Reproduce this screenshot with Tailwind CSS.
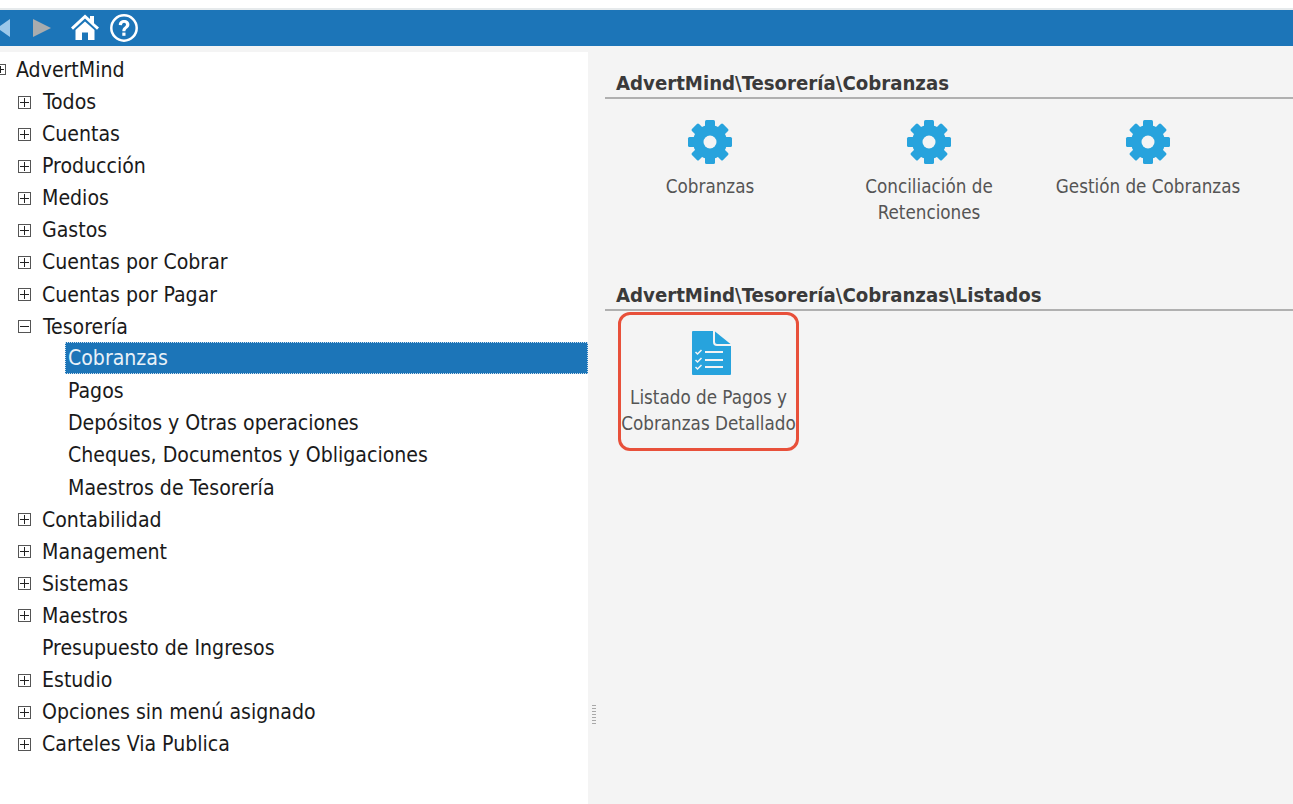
<!DOCTYPE html>
<html lang="es"><head><meta charset="utf-8"><title>AdvertMind</title>
<script src="https://cdn.jsdelivr.net/npm/@tailwindcss/browser@4"></script></head>
<body class="bg-white overflow-hidden">
<div class="w-[1293px] h-[804px] flex flex-col font-['DejaVu_Sans_Condensed','DejaVu_Sans',sans-serif] overflow-hidden">
  <div class="h-[8px] bg-white"></div>
  <div class="h-[2px] bg-[#e6eaec]"></div>
  <header class="h-[36px] bg-[#1c75b8] relative shrink-0">
    <svg class="absolute left-[-6px] top-[8px]" width="18" height="20" viewBox="0 0 18 20"><path d="M16 1v18L3 10z" fill="#9cc8ea"/></svg>
    <svg class="absolute left-[32px] top-[8px]" width="20" height="20" viewBox="0 0 20 20"><path d="M1 1v18l18-9z" fill="#a9acae"/></svg>
    <svg class="absolute left-[70px] top-[3px]" width="30" height="28" viewBox="0 0 30 28"><path d="M1 14.500 15 1.500l5 4.600V3h4v7.300l5 4.200-2 2.200L15 5.500 3 16.700z" fill="#fff"/><path d="M5.500 17 15 8.500l9.500 8.500v10H18v-7.500h-6V27H5.500z" fill="#fff"/></svg>
    <svg class="absolute left-[109px] top-[3px]" width="30" height="30" viewBox="0 0 30 30"><circle cx="15" cy="15" r="12.700" fill="none" stroke="#fff" stroke-width="2.500"/><path d="M9.800 12c0-3.200 2.300-5 5.400-5s5.200 1.800 5.200 4.500c0 3.800-4 3.700-4 6.800h-3.100c0-4.400 3.700-4.200 3.700-6.700 0-1-.8-1.800-1.900-1.800-1.300 0-2.100 1-2.100 2.400z" fill="#fff"/><rect x="13.300" y="19.600" width="3.200" height="3.200" fill="#fff"/></svg>
  </header>
  <div class="flex-1 flex min-h-0">
    <nav class="w-[588px] flex flex-col text-[21.100px] leading-[32.08px] text-[#1a1a1a] relative">
      <div class="h-[6px] shrink-0 bg-[#f4f4f4]"></div>
      <div class="h-[2px] shrink-0"></div>
      <div class="h-[32.08px] flex items-center pl-[16px] relative">
        <span class="absolute left-[-5px] top-[10px] w-[11px] h-[11px] border border-[#555] flex items-center justify-center"><span class="w-[7px] h-[1px] bg-[#222]"></span><span class="absolute w-[1px] h-[7px] bg-[#222]"></span></span>
        AdvertMind</div>
      <div class="h-[32.08px] flex items-center pl-[18px] gap-[12px]"><span class="w-[13px] h-[13px] border border-[#555] flex items-center justify-center relative"><span class="w-[9px] h-[1px] bg-[#222]"></span><span class="absolute w-[1px] h-[9px] bg-[#222]"></span></span>Todos</div>
      <div class="h-[32.08px] flex items-center pl-[18px] gap-[11px]"><span class="w-[13px] h-[13px] border border-[#555] flex items-center justify-center relative"><span class="w-[9px] h-[1px] bg-[#222]"></span><span class="absolute w-[1px] h-[9px] bg-[#222]"></span></span>Cuentas</div>
      <div class="h-[32.08px] flex items-center pl-[18px] gap-[11px]"><span class="w-[13px] h-[13px] border border-[#555] flex items-center justify-center relative"><span class="w-[9px] h-[1px] bg-[#222]"></span><span class="absolute w-[1px] h-[9px] bg-[#222]"></span></span>Producción</div>
      <div class="h-[32.08px] flex items-center pl-[18px] gap-[11px]"><span class="w-[13px] h-[13px] border border-[#555] flex items-center justify-center relative"><span class="w-[9px] h-[1px] bg-[#222]"></span><span class="absolute w-[1px] h-[9px] bg-[#222]"></span></span>Medios</div>
      <div class="h-[32.08px] flex items-center pl-[18px] gap-[11px]"><span class="w-[13px] h-[13px] border border-[#555] flex items-center justify-center relative"><span class="w-[9px] h-[1px] bg-[#222]"></span><span class="absolute w-[1px] h-[9px] bg-[#222]"></span></span>Gastos</div>
      <div class="h-[32.08px] flex items-center pl-[18px] gap-[11px]"><span class="w-[13px] h-[13px] border border-[#555] flex items-center justify-center relative"><span class="w-[9px] h-[1px] bg-[#222]"></span><span class="absolute w-[1px] h-[9px] bg-[#222]"></span></span>Cuentas por Cobrar</div>
      <div class="h-[32.08px] flex items-center pl-[18px] gap-[11px]"><span class="w-[13px] h-[13px] border border-[#555] flex items-center justify-center relative"><span class="w-[9px] h-[1px] bg-[#222]"></span><span class="absolute w-[1px] h-[9px] bg-[#222]"></span></span>Cuentas por Pagar</div>
      <div class="h-[32.08px] flex items-center pl-[18px] gap-[12px]"><span class="w-[13px] h-[13px] border border-[#555] flex items-center justify-center relative"><span class="w-[9px] h-[1px] bg-[#222]"></span></span>Tesorería</div>
      <div class="h-[32.08px] mt-[-1px] mb-[1px] ml-[65px] pl-[2px] flex items-center bg-[#1c75b8] text-[#e8f1f8] border border-dotted border-[#cfe0ee]">Cobranzas</div>
      <div class="h-[32.08px] pl-[68px] flex items-center">Pagos</div>
      <div class="h-[32.08px] pl-[68px] flex items-center">Depósitos y Otras operaciones</div>
      <div class="h-[32.08px] pl-[68px] flex items-center">Cheques, Documentos y Obligaciones</div>
      <div class="h-[32.08px] pl-[68px] flex items-center pt-[1px]">Maestros de Tesorería</div>
      <div class="h-[32.08px] flex items-center pl-[18px] gap-[11px] pt-[1px]"><span class="w-[13px] h-[13px] border border-[#555] flex items-center justify-center relative"><span class="w-[9px] h-[1px] bg-[#222]"></span><span class="absolute w-[1px] h-[9px] bg-[#222]"></span></span>Contabilidad</div>
      <div class="h-[32.08px] flex items-center pl-[18px] gap-[11px] pt-[1px]"><span class="w-[13px] h-[13px] border border-[#555] flex items-center justify-center relative"><span class="w-[9px] h-[1px] bg-[#222]"></span><span class="absolute w-[1px] h-[9px] bg-[#222]"></span></span>Management</div>
      <div class="h-[32.08px] flex items-center pl-[18px] gap-[11px] pt-[1px]"><span class="w-[13px] h-[13px] border border-[#555] flex items-center justify-center relative"><span class="w-[9px] h-[1px] bg-[#222]"></span><span class="absolute w-[1px] h-[9px] bg-[#222]"></span></span>Sistemas</div>
      <div class="h-[32.08px] flex items-center pl-[18px] gap-[11px] pt-[1px]"><span class="w-[13px] h-[13px] border border-[#555] flex items-center justify-center relative"><span class="w-[9px] h-[1px] bg-[#222]"></span><span class="absolute w-[1px] h-[9px] bg-[#222]"></span></span>Maestros</div>
      <div class="h-[32.08px] pl-[42px] flex items-center pt-[1px]">Presupuesto de Ingresos</div>
      <div class="h-[32.08px] flex items-center pl-[18px] gap-[11px] pt-[1px]"><span class="w-[13px] h-[13px] border border-[#555] flex items-center justify-center relative"><span class="w-[9px] h-[1px] bg-[#222]"></span><span class="absolute w-[1px] h-[9px] bg-[#222]"></span></span>Estudio</div>
      <div class="h-[32.08px] flex items-center pl-[18px] gap-[11px] pt-[1px]"><span class="w-[13px] h-[13px] border border-[#555] flex items-center justify-center relative"><span class="w-[9px] h-[1px] bg-[#222]"></span><span class="absolute w-[1px] h-[9px] bg-[#222]"></span></span>Opciones sin menú asignado</div>
      <div class="h-[32.08px] flex items-center pl-[18px] gap-[11px] pt-[1px]"><span class="w-[13px] h-[13px] border border-[#555] flex items-center justify-center relative"><span class="w-[9px] h-[1px] bg-[#222]"></span><span class="absolute w-[1px] h-[9px] bg-[#222]"></span></span>Carteles Via Publica</div>
    </nav>
    <main class="flex-1 bg-[#f4f4f4] relative pl-[17px] text-[#4d4d4d]">
      <div class="absolute left-[4px] top-[659px] w-[4px] h-[20px] bg-[repeating-linear-gradient(to_bottom,#a8a8a8_0,#a8a8a8_1px,#f4f4f4_1px,#f4f4f4_3px)]"></div>
      <h2 class="mt-[24px] h-[29px] pb-[1px] flex items-center pl-[11px] text-[20.200px] font-bold text-[#3a3a3a] border-b-2 border-[#b0b0b0] leading-none">AdvertMind\Tesorería\Cobranzas</h2>
      <div class="flex mt-[20px] ml-[-4.500px] text-[18.700px] leading-[26px] text-center text-[#555]">
        <div class="w-[219px] flex flex-col items-center">
          <svg width="46" height="46" viewBox="0 0 46 46"><g fill="#27a3dd"><circle cx="23" cy="23" r="17"/><rect x="18" y="1" width="10" height="44" rx="1.500"/><rect x="18" y="1" width="10" height="44" rx="1.500" transform="rotate(45 23 23)"/><rect x="18" y="1" width="10" height="44" rx="1.500" transform="rotate(90 23 23)"/><rect x="18" y="1" width="10" height="44" rx="1.500" transform="rotate(135 23 23)"/></g><circle cx="23" cy="23" r="6.500" fill="#f4f4f4"/></svg>
          <span class="mt-[9px]">Cobranzas</span>
        </div>
        <div class="w-[219px] flex flex-col items-center">
          <svg width="46" height="46" viewBox="0 0 46 46"><g fill="#27a3dd"><circle cx="23" cy="23" r="17"/><rect x="18" y="1" width="10" height="44" rx="1.500"/><rect x="18" y="1" width="10" height="44" rx="1.500" transform="rotate(45 23 23)"/><rect x="18" y="1" width="10" height="44" rx="1.500" transform="rotate(90 23 23)"/><rect x="18" y="1" width="10" height="44" rx="1.500" transform="rotate(135 23 23)"/></g><circle cx="23" cy="23" r="6.500" fill="#f4f4f4"/></svg>
          <span class="mt-[9px]">Conciliación de<br>Retenciones</span>
        </div>
        <div class="w-[219px] flex flex-col items-center">
          <svg width="46" height="46" viewBox="0 0 46 46"><g fill="#27a3dd"><circle cx="23" cy="23" r="17"/><rect x="18" y="1" width="10" height="44" rx="1.500"/><rect x="18" y="1" width="10" height="44" rx="1.500" transform="rotate(45 23 23)"/><rect x="18" y="1" width="10" height="44" rx="1.500" transform="rotate(90 23 23)"/><rect x="18" y="1" width="10" height="44" rx="1.500" transform="rotate(135 23 23)"/></g><circle cx="23" cy="23" r="6.500" fill="#f4f4f4"/></svg>
          <span class="mt-[9px] whitespace-nowrap">Gestión de Cobranzas</span>
        </div>
      </div>
      <h2 class="mt-[56px] h-[29px] pb-[1px] flex items-center pl-[11px] text-[20.200px] font-bold text-[#3a3a3a] border-b-2 border-[#b0b0b0] leading-none">AdvertMind\Tesorería\Cobranzas\Listados</h2>
      <div class="mt-[1px] ml-[13px] w-[181px] h-[139px] border-[3.500px] border-[#e8503a] rounded-[12px] flex flex-col items-center pt-[15.500px] text-[18.700px] leading-[26px] text-center text-[#555]">
        <svg class="ml-[6px] shrink-0" width="39" height="44" viewBox="0 0 39 44"><path fill="#27a3dd" d="M1 0h20v11q0 4 4 4h14v28q0 1-1 1H1q-1 0-1-1V1q0-1 1-1z"/><path fill="#27a3dd" d="M23 .5 38.500 13H25q-2 0-2-2z"/><g fill="none" stroke="#f4f4f4"><path stroke-width="2" d="M13 21h18M13 29h18M13 36h18"/><path stroke-width="1.500" d="M3.500 21l2 2 4-4M3.500 29l2 2 4-4M3.500 36l2 2 4-4"/></g></svg>
        <span class="mt-[10px] whitespace-nowrap">Listado de Pagos y<br>Cobranzas Detallado</span>
      </div>
    </main>
  </div>
</div>
</body></html>
